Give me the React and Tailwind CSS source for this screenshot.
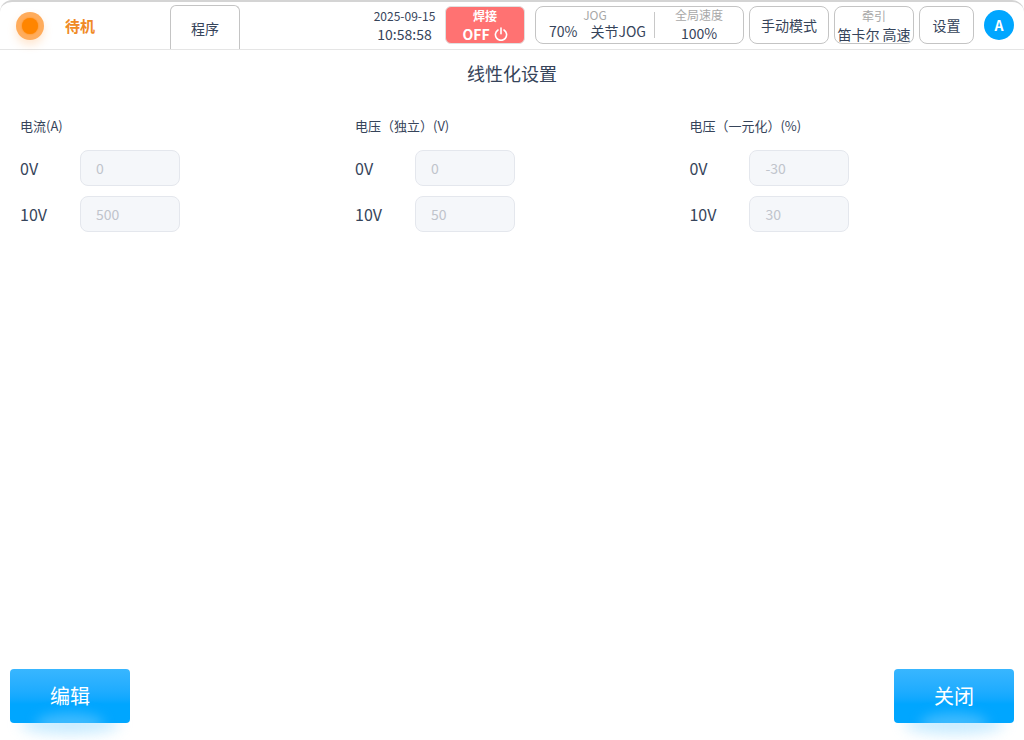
import React from "react";

function Field({ label, value }) {
  return (
    <div className="flex items-center h-[36px]">
      <div className="w-[60px] text-[16px] leading-[36px] text-[#36445a]">{label}</div>
      <div className="w-[100px] h-[36px] rounded-[8px] border border-[#e4e7ed] bg-[#f5f7fa] pl-[15px] text-[14px] leading-[34px] text-[#c0c4cc]">{value}</div>
    </div>
  );
}

function Col({ title, a, b, className }) {
  return (
    <div className={"flex flex-col " + className}>
      <div className="text-[13px] leading-[20px] text-[#36445a] mb-[14px]">{title}</div>
      <div className="flex flex-col gap-[10px]">
        <Field label="0V" value={a} />
        <Field label="10V" value={b} />
      </div>
    </div>
  );
}

function BlueButton({ children }) {
  return (
    <div className="relative w-[120px] h-[54px]">
      <div className="absolute left-[10px] right-[10px] top-[45px] h-[20px] rounded-[50%] bg-[#a8e0ff] blur-[7px] opacity-65" />
      <div className="relative w-[120px] h-[54px] rounded-[4px] overflow-hidden bg-gradient-to-b from-[#38b6ff] to-[#00a6ff] to-[65%] flex items-center justify-center text-[20px] text-white">
        <div className="absolute left-[26px] right-[26px] top-[44px] h-[20px] rounded-[50%] bg-[#3dbaff] blur-[6px]" />
        <span className="relative">{children}</span>
      </div>
    </div>
  );
}

export default function App() {
  return (
    <div className="w-[1024px] h-[740px] bg-white overflow-hidden flex flex-col relative rounded-[12px] border-t-2 border-[#d4d4d4] font-['Noto_Sans_CJK_SC','Noto_Sans',sans-serif]">
      <header className="h-[48px] shrink-0 border-b border-[#e5e5e5] flex items-stretch">
        <div className="w-[170px] flex items-center shrink-0">
          <div className="ml-[16px] w-[28px] h-[28px] rounded-full bg-[#ffac5c] flex items-center justify-center shadow-[0_5px_8px_rgba(255,160,70,0.25)]">
            <div className="w-[16px] h-[16px] rounded-full bg-[#ff8500] shadow-[0_0_2px_#ff8500]" />
          </div>
          <span className="ml-[21px] text-[15px] font-bold text-[#f08a24] relative top-[1px]">待机</span>
        </div>
        <div className="mt-[3px] w-[70px] border border-b-0 border-[#c4c4c4] rounded-t-[6px] flex items-center justify-center text-[14px] text-[#36445a] pt-[1px]">程序</div>
        <div className="ml-[134px] w-[61px] flex flex-col items-center shrink-0 pt-[5px] whitespace-nowrap">
          <div className="text-[12px] leading-[18px] text-[#36445a]">2025-09-15</div>
          <div className="text-[14px] leading-[18px] text-[#36445a]">10:58:58</div>
        </div>
        <div className="ml-[10px] mt-[4px] w-[80px] h-[38px] rounded-[6px] bg-[#ff7272] border border-[#e0e0e0] flex flex-col items-center text-white shrink-0">
          <div className="text-[12px] leading-[18px] font-bold">焊接</div>
          <div className="flex items-center gap-[4px] text-[14px] leading-[18px] font-bold">
            OFF
            <svg width="14" height="14" viewBox="0 0 14 14" fill="none" stroke="white" strokeWidth="1.6" strokeLinecap="round"><path d="M7 1v5.8" /><path d="M4 3a5.6 5.6 0 1 0 6 0" /></svg>
          </div>
        </div>
        <div className="ml-[10px] mt-[4px] w-[209px] h-[38px] rounded-[8px] border border-[#c4c4c4] flex items-center shrink-0">
          <div className="w-[119px] flex flex-col items-center border-r border-[#c8c8c8] h-[26px] relative">
            <div className="absolute top-[-6px] text-[12px] leading-[18px] text-[#a8a8a8]">JOG</div>
            <div className="absolute top-[10px] left-[13px] text-[14px] leading-[18px] text-[#36445a] whitespace-nowrap">70%<span className="ml-[13px]">关节JOG</span></div>
          </div>
          <div className="flex-1 h-[38px] flex flex-col items-center">
            <div className="text-[12px] leading-[18px] text-[#a8a8a8]">全局速度</div>
            <div className="text-[14px] leading-[18px] text-[#36445a]">100%</div>
          </div>
        </div>
        <div className="ml-[5px] mt-[4px] w-[80px] h-[38px] rounded-[8px] border border-[#c4c4c4] flex items-center justify-center text-[14px] text-[#36445a] shrink-0">手动模式</div>
        <div className="ml-[5px] mt-[4px] w-[80px] h-[38px] rounded-[8px] border border-[#c4c4c4] flex flex-col items-center text-[#36445a] shrink-0 overflow-hidden">
          <div className="text-[12px] leading-[18px] text-[#a8a8a8]">牵引</div>
          <div className="text-[14px] leading-[18px] whitespace-nowrap">笛卡尔 高速</div>
        </div>
        <div className="ml-[5px] mt-[4px] w-[55px] h-[38px] rounded-[8px] border border-[#c4c4c4] flex items-center justify-center text-[14px] text-[#36445a] shrink-0">设置</div>
        <div className="ml-[10px] mt-[8px] w-[30px] h-[30px] rounded-full bg-[#00a6ff] flex items-center justify-center text-white text-[14px] font-bold shrink-0">A</div>
      </header>
      <div className="flex-1 flex flex-col relative">
        <div className="text-center text-[18px] leading-[24px] text-[#36445a] mt-[11px]">线性化设置</div>
        <div className="flex mt-[31px] pl-[20px]">
          <Col className="w-[335px]" title="电流(A)" a="0" b="500" />
          <Col className="w-[334.4px]" title="电压（独立）(V)" a="0" b="50" />
          <Col className="w-[300px]" title="电压（一元化）(%)" a="-30" b="30" />
        </div>
        <div className="mt-auto flex justify-between px-[10px] pb-[17px]">
          <BlueButton>编辑</BlueButton>
          <BlueButton>关闭</BlueButton>
        </div>
      </div>
    </div>
  );
}
